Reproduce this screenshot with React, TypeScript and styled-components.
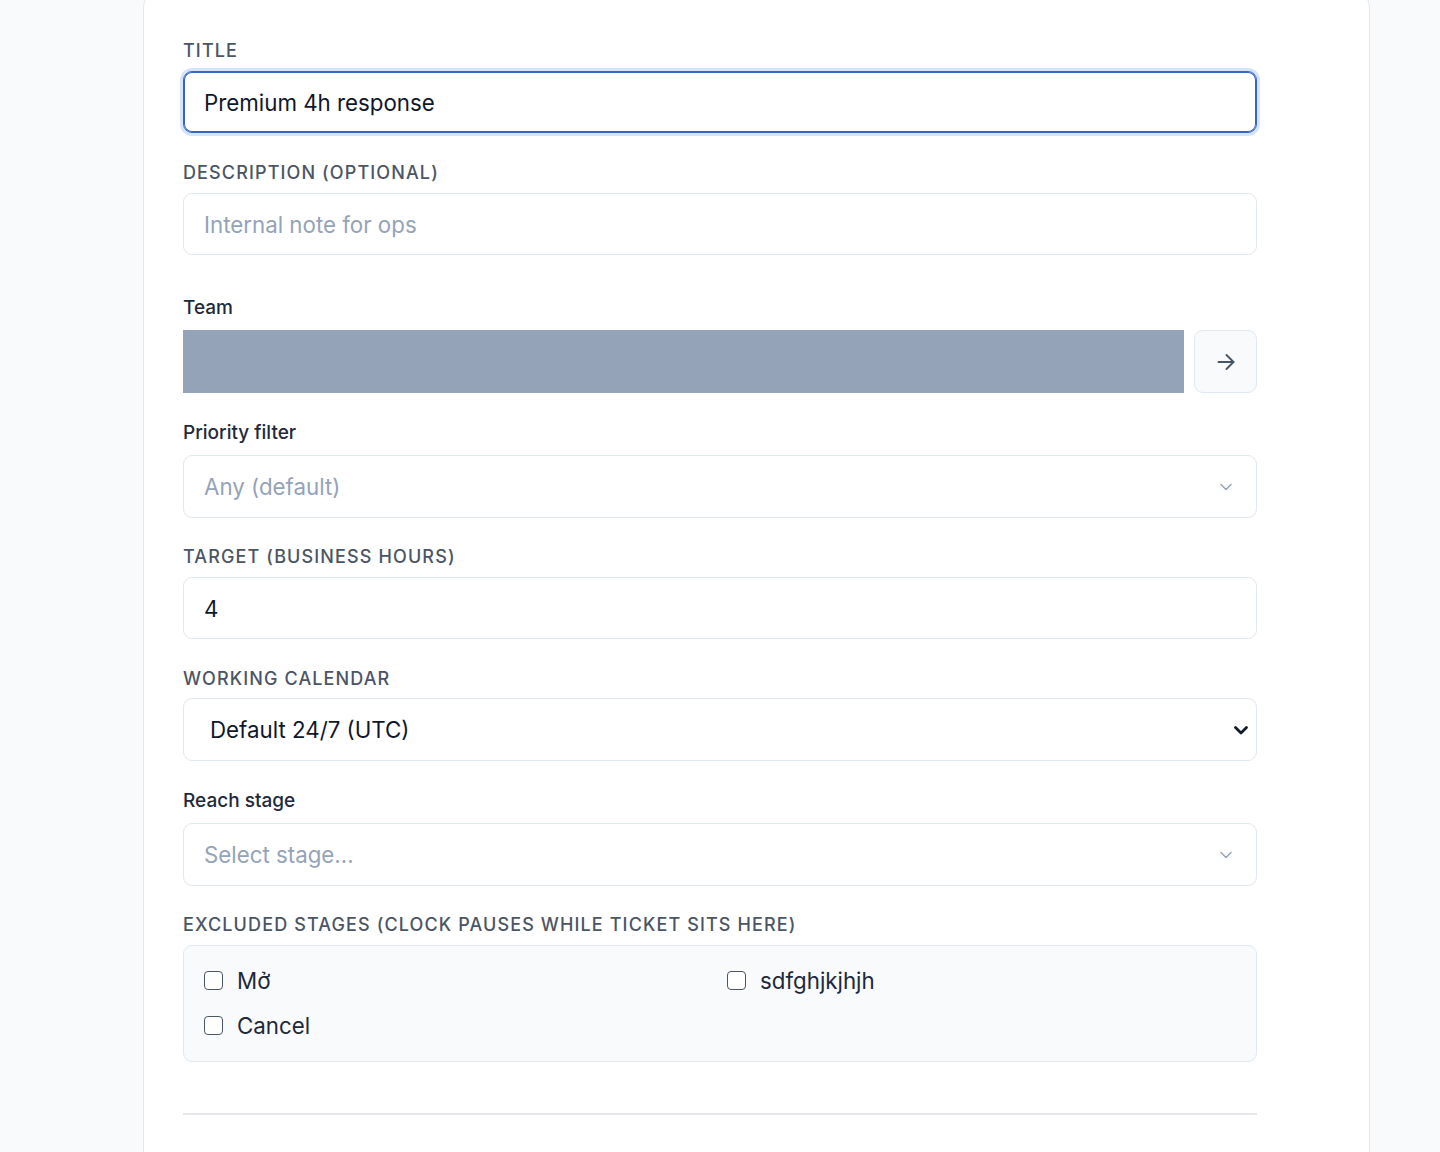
import styled, { createGlobalStyle } from 'styled-components';

const GlobalStyle = createGlobalStyle`
  * { box-sizing: border-box; }
  body {
    margin: 0;
    background: #f8fafc;
    font-family: Inter, "Noto Sans", sans-serif;
    color: #0f172a;
  }
`;

const Page = styled.div`
  height: 1152px;
  overflow: hidden;
  padding-left: 143px;
  padding-right: 70px;
`;

const Card = styled.div`
  margin-top: -12px;
  background: #ffffff;
  border: 1px solid #e5e7eb;
  border-radius: 20px;
  padding: 51px 39px 60px;
  min-height: 1300px;
`;

const Form = styled.form`
  width: 1074px;
  display: flex;
  flex-direction: column;
`;

const Field = styled.div<{ $gap?: number }>`
  display: flex;
  flex-direction: column;
  margin-bottom: ${(p) => p.$gap ?? 29}px;
`;

const Caps = styled.label<{ $space?: number }>`
  font-size: 18px;
  line-height: 22px;
  font-weight: 500;
  letter-spacing: 1.12px;
  text-transform: uppercase;
  color: #4b5565;
  margin-bottom: ${(p) => p.$space ?? 9}px;
`;

const Label = styled.label`
  font-size: 19px;
  line-height: 22px;
  font-weight: 500;
  color: #1e293b;
  margin-bottom: 11px;
`;

const Input = styled.input<{ $focus?: boolean }>`
  height: 62px;
  width: 100%;
  border: 1px solid ${(p) => (p.$focus ? '#3864c8' : '#e2e8f0')};
  border-radius: 9px;
  padding: 0 20px;
  font-family: inherit;
  font-size: 22.3px;
  color: #0f172a;
  background: #fff;
  outline: none;
  box-shadow: ${(p) => (p.$focus ? '0 0 0 3px #d6e4fb, inset 0 0 0 1px #3864c8' : 'none')};

  &::placeholder {
    color: #94a3b8;
  }
`;

const TeamRow = styled.div`
  display: flex;
  gap: 10px;
`;

const TeamBar = styled.div`
  flex: 1;
  height: 63px;
  background: #94a3b8;
`;

const IconButton = styled.button`
  width: 63px;
  height: 63px;
  border: 1px solid #e2e8f0;
  border-radius: 9px;
  background: #f8fafc;
  color: #475569;
  display: flex;
  align-items: center;
  justify-content: center;
  padding: 0;
`;

const SelectBox = styled.div`
  height: 63px;
  border: 1px solid #e2e8f0;
  border-radius: 9px;
  padding: 0 20px;
  display: flex;
  align-items: center;
  justify-content: space-between;
  font-size: 22.3px;
  color: #94a3b8;
  background: #fff;
`;

const NativeSelect = styled.div`
  height: 63px;
  border: 1px solid #e2e8f0;
  border-radius: 9px;
  padding: 0 7px 0 26px;
  display: flex;
  align-items: center;
  justify-content: space-between;
  font-size: 22.3px;
  color: #0f172a;
  background: #fff;
`;

const Stages = styled.div`
  border: 1px solid #e2e8f0;
  border-radius: 9px;
  background: #f8fafc;
  padding: 21px 20px 22px;
  display: grid;
  grid-template-columns: 1fr 1fr;
  row-gap: 18px;
  column-gap: 14px;
`;

const Check = styled.label`
  display: flex;
  align-items: center;
  gap: 14px;
  font-size: 22.3px;
  line-height: 27px;
  color: #1e293b;
`;

const Box = styled.span`
  width: 19px;
  height: 19px;
  border: 1.5px solid #4b5563;
  border-radius: 4px;
  background: #fff;
`;

const Divider = styled.hr`
  border: none;
  border-top: 2px solid #e5e7eb;
  margin: 51px 0 0;
`;

const Chevron = () => (
  <svg width="20" height="20" viewBox="0 0 24 24" fill="none" stroke="#94a3b8" strokeWidth="1.75" strokeLinecap="round" strokeLinejoin="round">
    <path d="M6 9l6 6 6-6" />
  </svg>
);

const BoldChevron = () => (
  <svg width="16" height="16" viewBox="0 0 16 16" fill="none" stroke="#111827" strokeWidth="2.8" strokeLinecap="round" strokeLinejoin="round">
    <path d="M2.5 5.5L8 11l5.5-5.5" />
  </svg>
);

const Arrow = () => (
  <svg width="24" height="24" viewBox="0 0 24 24" fill="none" stroke="currentColor" strokeWidth="1.9" strokeLinecap="round" strokeLinejoin="round">
    <path d="M4.5 12h15" />
    <path d="M12.5 5l7 7-7 7" />
  </svg>
);

const stages = ['Mở', 'sdfghjkjhjh', 'Cancel'];

export default function App() {
  return (
    <Page>
      <GlobalStyle />
      <Card>
        <Form>
          <Field>
            <Caps>Title</Caps>
            <Input $focus defaultValue="Premium 4h response" />
          </Field>
          <Field $gap={42}>
            <Caps>Description (optional)</Caps>
            <Input placeholder="Internal note for ops" />
          </Field>
          <Field>
            <Label>Team</Label>
            <TeamRow>
              <TeamBar />
              <IconButton type="button">
                <Arrow />
              </IconButton>
            </TeamRow>
          </Field>
          <Field $gap={28}>
            <Label>Priority filter</Label>
            <SelectBox>
              Any (default)
              <Chevron />
            </SelectBox>
          </Field>
          <Field>
            <Caps>Target (business hours)</Caps>
            <Input defaultValue="4" />
          </Field>
          <Field>
            <Caps $space={8}>Working calendar</Caps>
            <NativeSelect>
              Default 24/7 (UTC)
              <BoldChevron />
            </NativeSelect>
          </Field>
          <Field $gap={28}>
            <Label>Reach stage</Label>
            <SelectBox>
              Select stage...
              <Chevron />
            </SelectBox>
          </Field>
          <Field $gap={0}>
            <Caps>Excluded stages (clock pauses while ticket sits here)</Caps>
            <Stages>
              {stages.map((s) => (
                <Check key={s}>
                  <Box />
                  {s}
                </Check>
              ))}
            </Stages>
          </Field>
          <Divider />
        </Form>
      </Card>
    </Page>
  );
}
